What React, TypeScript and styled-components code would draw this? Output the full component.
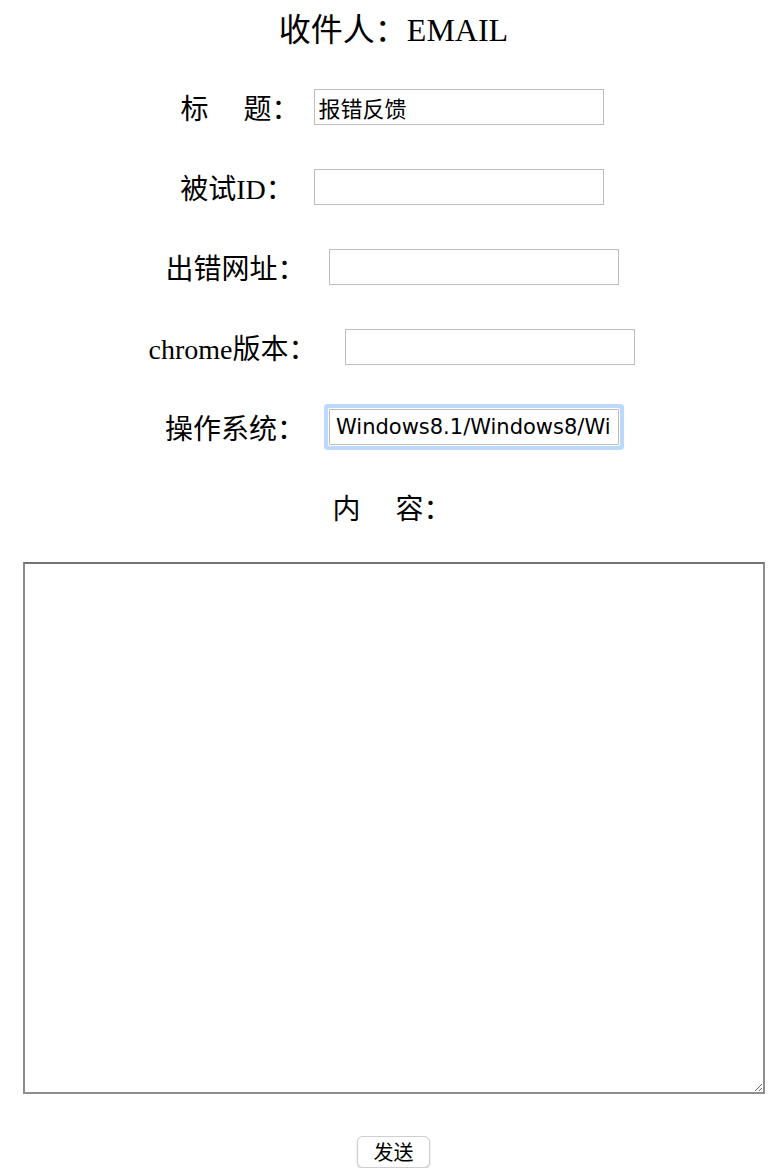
import React, { useState } from "react";
import styled, { createGlobalStyle } from "styled-components";

const GlobalStyle = createGlobalStyle`
  body {
    margin: 0;
    background: #fff;
    font-family: "Liberation Serif", "Noto Sans CJK SC", serif;
    color: #000;
  }
`;

const Page = styled.form`
  display: flex;
  flex-direction: column;
  align-items: center;
  padding-top: 10px;
  width: 784px;
`;

const Title = styled.div`
  font-size: 32px;
  line-height: 40px;
  height: 40px;
  margin: 0 0 17px 3px;
`;

const Row = styled.div`
  display: flex;
  align-items: center;
  justify-content: center;
  height: 80px;
  font-size: 28px;
`;

const Label = styled.span<{ $gap: number }>`
  display: inline-flex;
  align-items: center;
  white-space: nowrap;
  margin-right: ${p => p.$gap}px;
`;

const Spacer = styled.span<{ $w: number }>`
  display: inline-block;
  width: ${p => p.$w}px;
`;

const Field = styled.input<{ $focused?: boolean }>`
  box-sizing: border-box;
  width: 290px;
  height: 36px;
  border: 1px solid #bdbdbd;
  border-radius: ${p => (p.$focused ? "1px" : "0")};
  padding: 0 ${p => (p.$focused ? "6px" : "4px")};
  font-family: "DejaVu Sans", "Noto Sans CJK SC", sans-serif;
  font-size: ${p => (p.$focused ? "21px" : "22px")};
  color: #000;
  background: #fff;
  outline: none;
  box-shadow: ${p => (p.$focused ? "0 0 0 1px #fff, 0 0 0 5px #bcd9fb" : "none")};
`;

const Content = styled.textarea`
  box-sizing: border-box;
  align-self: flex-start;
  margin: 15px 0 0 23px;
  width: 742px;
  height: 532px;
  border: 2px solid #8f8f8f;
  border-top-color: #737373;
  border-left-color: #8a8a8a;
  padding: 4px;
  font-family: "Liberation Sans", sans-serif;
  font-size: 16px;
  outline: none;
`;

const SendButton = styled.button`
  margin: 42px 0 0 3px;
  width: 73px;
  height: 32px;
  border: 1px solid #cfcfcf;
  border-radius: 6px;
  background: #fff;
  box-shadow: 0 1px 2px rgba(0, 0, 0, 0.2);
  font-family: "Noto Sans CJK SC", sans-serif;
  font-size: 20px;
  line-height: 1;
  color: #000;
  padding: 0;
  cursor: pointer;
`;

export default function App() {
  const [subject, setSubject] = useState("报错反馈");
  const [userId, setUserId] = useState("");
  const [url, setUrl] = useState("");
  const [chrome, setChrome] = useState("");
  const [os, setOs] = useState("Windows8.1/Windows8/Windows7/WindowsXP");
  const [body, setBody] = useState("");

  return (
    <>
      <GlobalStyle />
      <Page onSubmit={e => e.preventDefault()}>
        <Title>收件人：EMAIL</Title>
        <Row>
          <Label $gap={14}>标<Spacer $w={35} />题：</Label>
          <Field value={subject} onChange={e => setSubject(e.target.value)} />
        </Row>
        <Row>
          <Label $gap={20}>被试ID：</Label>
          <Field value={userId} onChange={e => setUserId(e.target.value)} />
        </Row>
        <Row>
          <Label $gap={23}>出错网址：</Label>
          <Field value={url} onChange={e => setUrl(e.target.value)} />
        </Row>
        <Row>
          <Label $gap={29}>chrome版本：</Label>
          <Field value={chrome} onChange={e => setChrome(e.target.value)} />
        </Row>
        <Row>
          <Label $gap={24}>操作系统：</Label>
          <Field $focused value={os} onChange={e => setOs(e.target.value)} />
        </Row>
        <Row>
          <Label $gap={0}>内<Spacer $w={35} />容：</Label>
        </Row>
        <Content value={body} onChange={e => setBody(e.target.value)} />
        <SendButton type="submit">发送</SendButton>
      </Page>
    </>
  );
}
